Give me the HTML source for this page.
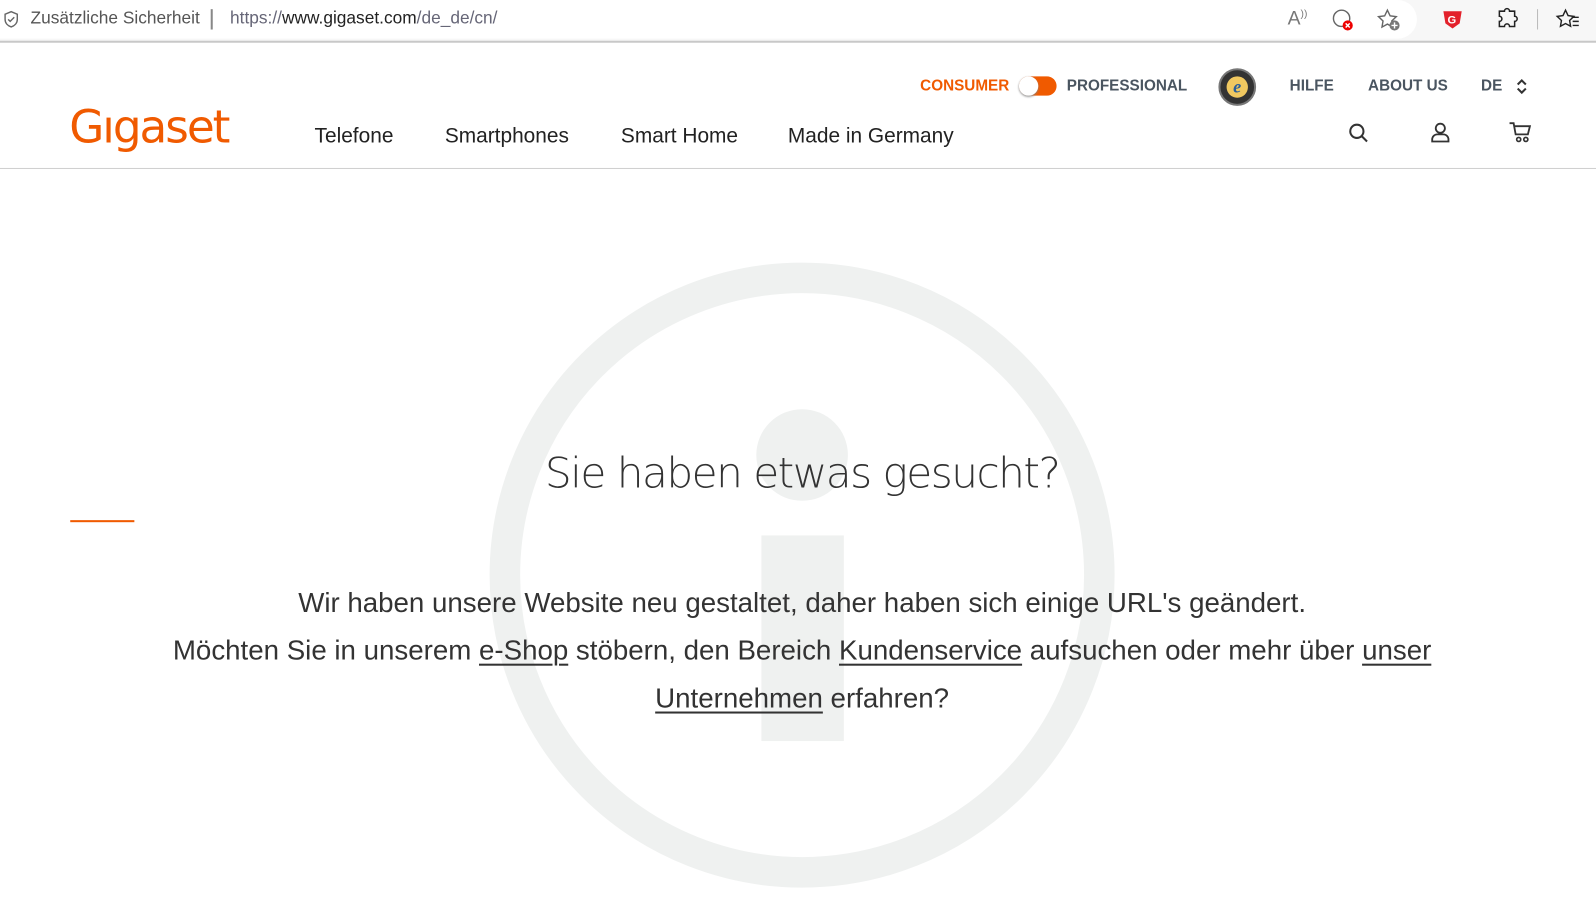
<!DOCTYPE html>
<html><head><meta charset="utf-8"><style>
*{margin:0;padding:0;box-sizing:border-box}
body{width:1596px;height:923px;overflow:hidden;background:#fff;font-family:"Liberation Sans",sans-serif;position:relative}
#w{position:absolute;left:0;top:0;width:1568px;height:907px;transform:scale(1.0179);transform-origin:0 0}
.abs{position:absolute}
.bar{top:0;left:0;width:1568px;height:40px;background:#f7f7f7}
.url{top:0;left:0;width:1392px;height:38px;background:#fff;border-radius:0 19px 19px 0}
.bline{top:40px;left:0;width:1568px;height:2px;background:#c8c8c8}
.top{font-size:15px;font-weight:bold;color:#4a5560;top:76px}
.menu{font-size:20.5px;color:#222;top:122px}
.hline{top:165px;left:0;width:1568px;height:1px;background:#cfcfcf}
u{text-decoration-thickness:2px;text-underline-offset:4px}
</style></head><body><div id="w">
<div class="abs bar"></div><div class="abs url"></div><div class="abs bline"></div>
<svg class="abs" style="left:2px;top:10px" width="18" height="18" viewBox="0 0 18 18"><path d="M9 1.5l6 2.5v5c0 4-3 6.5-6 7.5-3-1-6-3.5-6-7.5V4z" fill="none" stroke="#666" stroke-width="1.4"/><path d="M6 9l2 2 4-4" fill="none" stroke="#666" stroke-width="1.4"/></svg>
<div class="abs" style="left:30px;top:8px;font-size:17px;color:#555">Zusätzliche Sicherheit</div>
<div class="abs" style="left:207px;top:9px;width:2px;height:20px;background:#888"></div>
<div class="abs" style="left:226px;top:8px;font-size:17px;color:#667"><span>https://</span><span style="color:#222">www.gigaset.com</span>/de_de/cn/</div>
<div class="abs" style="left:1265px;top:8px;font-size:19px;color:#777">A<sup style="font-size:10px">))</sup></div>
<svg class="abs" style="left:1308px;top:8px" width="24" height="24"><circle cx="10" cy="10" r="8" fill="none" stroke="#666" stroke-width="1.4"/><circle cx="16" cy="17" r="5" fill="#e00"/><path d="M14 15l4 4M18 15l-4 4" stroke="#fff" stroke-width="1.4"/></svg>
<svg class="abs" style="left:1352px;top:8px" width="26" height="24"><path d="M11 2l2.7 5.6 6 .8-4.4 4.2 1 6-5.3-2.9-5.3 2.9 1-6L2.3 8.4l6-.8z" fill="none" stroke="#666" stroke-width="1.4"/><circle cx="18" cy="17" r="5" fill="#777"/><path d="M18 14v6M15 17h6" stroke="#fff" stroke-width="1.4"/></svg>
<svg class="abs" style="left:1416px;top:8px" width="22" height="22"><path d="M2 3h18l-2 12-7 5-7-5z" fill="#e3212b"/><text x="6" y="15" font-size="11" font-weight="bold" fill="#fff" font-family="Liberation Sans">G</text></svg>
<svg class="abs" style="left:1469px;top:7px" width="24" height="24"><path d="M9 4a2.5 2.5 0 015 0h5v5a2.5 2.5 0 010 5v5h-5a2.5 2.5 0 00-5 0H4v-5a2.5 2.5 0 000-5V4z" fill="none" stroke="#222" stroke-width="1.5"/></svg>
<div class="abs" style="left:1510px;top:9px;width:1px;height:20px;background:#bbb"></div>
<svg class="abs" style="left:1528px;top:7px" width="26" height="24"><path d="M10 3l2.5 5.3 5.7.8-4.2 4 1 5.7-5-2.7-5 2.7 1-5.7-4.2-4 5.7-.8z" fill="none" stroke="#222" stroke-width="1.4"/><path d="M16 10h7M17 14h6M17 18h6" stroke="#222" stroke-width="1.4"/></svg>

<div class="abs" style="left:68px;top:98px;font-size:44.5px;color:#f05a00;font-family:'DejaVu Sans',sans-serif;letter-spacing:-2px;line-height:56px">Gıgaset</div>
<div class="abs menu" style="left:309px">Telefone</div>
<div class="abs menu" style="left:437px">Smartphones</div>
<div class="abs menu" style="left:610px">Smart Home</div>
<div class="abs menu" style="left:774px">Made in Germany</div>
<div class="abs top" style="left:904px;color:#f05a00">CONSUMER</div>
<div class="abs" style="left:1001px;top:75px;width:37px;height:19px;border-radius:10px;background:#f05a00"></div>
<div class="abs" style="left:1001px;top:75px;width:19px;height:19px;border-radius:50%;background:#fff;box-shadow:0 1px 2px #888"></div>
<div class="abs top" style="left:1048px">PROFESSIONAL</div>
<div class="abs" style="left:1197px;top:67px;width:37px;height:37px;border-radius:50%;background:#333;border:2px solid #777"><div style="margin:6px;width:21px;height:21px;border-radius:50%;background:#f0c860;text-align:center;font:italic bold 18px 'Liberation Serif',serif;color:#2a5f9a;line-height:20px">e</div></div>
<div class="abs top" style="left:1267px">HILFE</div>
<div class="abs top" style="left:1344px">ABOUT US</div>
<div class="abs top" style="left:1455px">DE</div>
<svg class="abs" style="left:1488px;top:76px" width="14" height="18"><path d="M3 7l4-4 4 4M3 11l4 4 4-4" fill="none" stroke="#333" stroke-width="2"/></svg>
<svg class="abs" style="left:1324px;top:120px" width="22" height="22"><circle cx="9" cy="9" r="6.5" fill="none" stroke="#333" stroke-width="2"/><path d="M14 14l5 5" stroke="#333" stroke-width="2"/></svg>
<svg class="abs" style="left:1404px;top:119px" width="22" height="22"><circle cx="11" cy="7" r="4.5" fill="none" stroke="#333" stroke-width="1.8"/><path d="M3 20v-2a5 5 0 015-5h6a5 5 0 015 5v2z" fill="none" stroke="#333" stroke-width="1.8"/></svg>
<svg class="abs" style="left:1482px;top:119px" width="24" height="22"><path d="M1 2h4l2 11h12l2-8H6" fill="none" stroke="#333" stroke-width="1.8"/><circle cx="10" cy="18" r="2" fill="none" stroke="#333" stroke-width="1.6"/><circle cx="17" cy="18" r="2" fill="none" stroke="#333" stroke-width="1.6"/></svg>
<div class="abs hline"></div>

<svg class="abs" style="left:0;top:0" width="1568" height="907"><circle cx="788" cy="565" r="292" fill="none" stroke="#eff1f0" stroke-width="30"/><circle cx="788" cy="447" r="45" fill="#eff1f0"/><rect x="748" y="526" width="81" height="202" fill="#eff1f0"/></svg>
<div class="abs" style="left:69px;top:511px;width:63px;height:2px;background:#f05a00"></div>
<div class="abs" style="left:0;width:1576px;top:440px;text-align:center;font-size:41.5px;color:#333;font-family:'DejaVu Sans',sans-serif;font-weight:200;letter-spacing:-1.5px">Sie haben etwas gesucht?</div>
<div class="abs" style="left:110px;width:1356px;top:568px;text-align:center;font-size:27.2px;line-height:47px;color:#333">Wir haben unsere Website neu gestaltet, daher haben sich einige URL's geändert.<br>Möchten Sie in unserem <u>e-Shop</u> stöbern, den Bereich <u>Kundenservice</u> aufsuchen oder mehr über <u>unser</u><br><u>Unternehmen</u> erfahren?</div>
</div></body></html>
